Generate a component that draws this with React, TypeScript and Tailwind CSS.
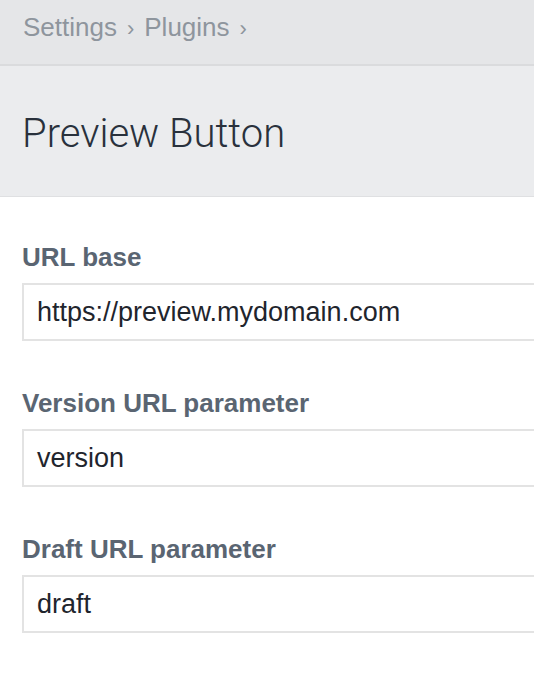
import React from "react";

const Field = ({ label, value }: { label: string; value: string }) => (
  <div className="mb-[50px]">
    <div className="text-[26px] leading-[25px] font-bold text-[#5a6572] whitespace-nowrap">{label}</div>
    <div className="mt-[13px] h-[58px] w-[600px] border-2 border-[#e3e3e3] bg-white pl-[13px] flex items-center">
      <span className="text-[27px] leading-[54px] text-[#1f252d] whitespace-nowrap">{value}</span>
    </div>
  </div>
);

export default function App() {
  return (
    <div className="w-[534px] h-[680px] overflow-hidden bg-white" style={{ fontFamily: '"Liberation Sans", Arial, sans-serif' }}>
      <div className="h-[66px] bg-[#e5e6e8] border-b-2 border-[#dadbdd] px-[23px] pt-[14px]">
        <div className="text-[26px] leading-[26px] text-[#8e959d] whitespace-nowrap flex items-baseline">
          <span>Settings</span>
          <span className="mx-[10px] text-[22px]">›</span>
          <span>Plugins</span>
          <span className="ml-[10px] text-[22px]">›</span>
        </div>
      </div>
      <div className="h-[131px] bg-[#ebecee] border-b border-[#dfe0e2] px-[22px] pt-[48px]">
        <div className="text-[40px] leading-[40px] font-light text-[#29313c] whitespace-nowrap" style={{ fontFamily: 'Roboto, sans-serif' }}>
          Preview Button
        </div>
      </div>
      <div className="px-[22px] pt-[48px]">
        <Field label="URL base" value="https://preview.mydomain.com" />
        <Field label="Version URL parameter" value="version" />
        <Field label="Draft URL parameter" value="draft" />
      </div>
    </div>
  );
}
